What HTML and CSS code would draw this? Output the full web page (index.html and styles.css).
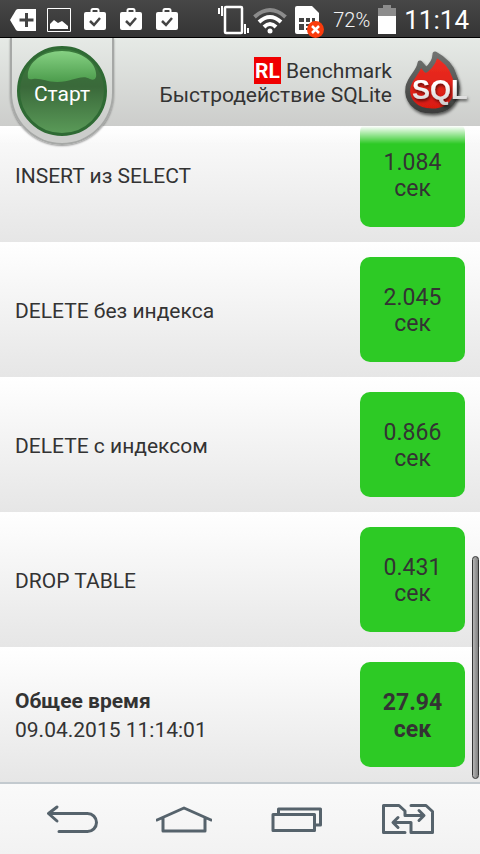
FILE: index.html
```html
<!DOCTYPE html>
<html lang="ru">
<head>
    <meta charset="UTF-8">
    <meta name="viewport" content="width=device-width, initial-scale=1.0">
    <title>RL Benchmark</title>
    <link rel="stylesheet" href="styles.css">
</head>
<body>
    <!-- shared icon -->
    <svg class="defs" width="0" height="0">
        <symbol id="bag" viewBox="0 0 24 24">
            <path d="M8.500 5V2.500Q8.500 1 10 1h4q1.500 0 1.500 1.500V5" fill="none" stroke="#fff" stroke-width="2"/>
            <path d="M1 6q0-2 2-2h18q2 0 2 2v14q0 2-2 2H3q-2 0-2-2z" fill="#fff"/>
            <path d="M7 13l4 4 6-7" fill="none" stroke="#444" stroke-width="2.500"/>
        </symbol>
    </svg>

    <div class="status-bar">
        <div class="status-left">
            <svg class="icon" width="24" height="24" viewBox="0 0 24 24">
                <path d="M-1 12L5 2q1-1 2-1h18v22H7q-1 0-2-1z" fill="#fff"/>
                <path d="M15.500 5v14M8.500 12h14" stroke="#444" stroke-width="3"/>
            </svg>
            <svg class="icon" width="24" height="24" viewBox="0 0 24 24">
                <path d="M.5.500h23v23H.5z" fill="none" stroke="#fff"/>
                <path d="M3 21v-5l4-4 4 3 4-2 6 5v3z" fill="#fff"/>
            </svg>
            <svg class="icon" width="24" height="24"><use href="#bag"/></svg>
            <svg class="icon" width="24" height="24"><use href="#bag"/></svg>
            <svg class="icon" width="24" height="24"><use href="#bag"/></svg>
        </div>
        <div class="status-right">
            <svg class="icon" width="27" height="30" viewBox="0 0 27 30">
                <rect x="7" y="2" width="17" height="26" rx="1" fill="none" stroke="#fff" stroke-width="2.500"/>
                <path d="M1 3v6M4 1v10M27 19v10M30 23v5" stroke="#fff" stroke-width="2"/>
            </svg>
            <svg class="icon" width="34" height="30" viewBox="0 0 34 30">
                <path d="M1.500 12q15.500-14 31 0" fill="none" stroke="#8c8c8c" stroke-width="4"/>
                <path d="M6 17q11-10 22 0M11 22q6-6 12 0" fill="none" stroke="#fff" stroke-width="4"/>
                <circle cx="17" cy="26" r="2.500" fill="#fff"/>
            </svg>
            <svg class="icon" width="30" height="30" viewBox="0 0 30 30">
                <path d="M0 3q0-2 2-2h15l7 7v19q0 2-2 2H2q-2 0-2-2z" fill="#fff"/>
                <path d="M4 13h5v4H4zM11 13h4v4h-4zM17 13h3v4h-3zM4 19h5v6H4zM11 19h4v2h-4zM11 23h4v2h-4z" fill="#444"/>
                <circle cx="20.500" cy="24.500" r="8.500" fill="#fa3b0c"/>
                <path d="M17 21l7 7M24 21l-7 7" stroke="#fff" stroke-width="2.500"/>
            </svg>
            <span class="battery-level">72%</span>
            <svg class="icon" width="18" height="30" viewBox="0 0 18 30">
                <path d="M0 3h5V0h8v3h5v8H0z" fill="#8c8c8c"/>
                <path d="M0 11h18v18H0z" fill="#fff"/>
            </svg>
            <span class="clock">11:14</span>
        </div>
    </div>

    <header class="header">
        <div class="start-holder">
            <button class="start-button">
                <svg class="gloss" width="70" height="34" viewBox="0 0 70 34">
                    <defs>
                        <linearGradient id="gloss" x1="0" y1="0" x2="0" y2="1">
                            <stop offset="0" stop-color="#86d183"/>
                            <stop offset="1" stop-color="#4c9c4c"/>
                        </linearGradient>
                    </defs>
                    <path d="M1 28C-1 14 14 1 35 1s36 13 34 26q-1 4-6 2c-9-5-17 3-33 3-10 0-16-4-24-3q-4 1-5-1z" fill="url(#gloss)"/>
                </svg>
                <span>Старт</span>
            </button>
        </div>
        <div class="title">
            <div><span class="rl">RL</span> Benchmark</div>
            <div>Быстродействие SQLite</div>
        </div>
        <svg class="logo" width="64" height="72" viewBox="0 0 64 72">
            <defs>
                <linearGradient id="flame" x1="0" y1="0" x2="0" y2="1">
                    <stop offset="0" stop-color="#ee3026"/>
                    <stop offset="1" stop-color="#d8180f"/>
                </linearGradient>
                <linearGradient id="edge" x1="0" y1="0" x2="0" y2="1">
                    <stop offset="0" stop-color="#707270"/>
                    <stop offset="1" stop-color="#3c3e3c"/>
                </linearGradient>
                <linearGradient id="silver" x1="0" y1="0" x2="0" y2="1">
                    <stop offset="0.300" stop-color="#fff"/>
                    <stop offset="1" stop-color="#ccc"/>
                </linearGradient>
                <filter id="shade" x="-20%" y="-20%" width="150%" height="150%">
                    <feDropShadow dx="1" dy="2" stdDeviation="1.500" flood-opacity="0.6"/>
                </filter>
            </defs>
            <path d="M31 8C42 14 48 22 50 29C57 43 52 65 28 65C10 65 2 53 4 41C6 31 15 26 16 17L22 24C27 20 31 15 31 8z" fill="url(#flame)" stroke="url(#edge)" stroke-width="5" stroke-linejoin="round" filter="url(#shade)"/>
            <text class="logo-text" x="8" y="53" fill="url(#silver)" filter="url(#shade)">SQL</text>
        </svg>
    </header>

    <main class="results">
        <ul class="list">
            <li class="row">
                <div class="name">INSERT из SELECT</div>
                <div class="value">1.084<br>сек</div>
            </li>
            <li class="row">
                <div class="name">DELETE без индекса</div>
                <div class="value">2.045<br>сек</div>
            </li>
            <li class="row">
                <div class="name">DELETE с индексом</div>
                <div class="value">0.866<br>сек</div>
            </li>
            <li class="row">
                <div class="name">DROP TABLE</div>
                <div class="value">0.431<br>сек</div>
            </li>
            <li class="row">
                <div class="name"><b>Общее время</b><br>09.04.2015 11:14:01</div>
                <div class="value total">27.94<br>сек</div>
            </li>
        </ul>
        <div class="scrollbar"></div>
    </main>

    <nav class="nav">
        <button class="nav-button" aria-label="Назад">
            <svg width="56" height="36" viewBox="0 0 56 36">
                <path d="M13 6L4.500 12.500L13 20M5 12.500h38.500a9 9 0 0 1 0 18H15"/>
            </svg>
        </button>
        <button class="nav-button" aria-label="Домой">
            <svg width="56" height="36" viewBox="0 0 56 36">
                <path d="M1 19L28 7l27 12M7 17v13h42V17"/>
            </svg>
        </button>
        <button class="nav-button" aria-label="Недавние">
            <svg width="56" height="36" viewBox="0 0 56 36">
                <path d="M5 13.500h41.500v16H5zM10.500 13V8h42v16H48"/>
            </svg>
        </button>
        <button class="nav-button" aria-label="Переключить">
            <svg width="56" height="36" viewBox="0 0 56 36">
                <path d="M25 31.500H3.500v-27H19l6 5.500v4.500h18M39 9.500l5 5-5 5M31 4.500h15l6.500 6v21H31v-10H13.500M18 16.500l-5 5 5 5"/>
            </svg>
        </button>
    </nav>
</body>
</html>
```
FILE: styles.css
```css
* {
    box-sizing: border-box;
}
body {
    margin: 0;
    height: 100vh;
    display: flex;
    flex-direction: column;
    overflow: hidden;
    font-family: Roboto, sans-serif;
    font-size: 21px;
    color: #333;
    background: #fff;
}
button {
    padding: 0;
    border: none;
    background: none;
    font-family: inherit;
    cursor: pointer;
}
.defs {
    position: absolute;
}

/* status bar */
.status-bar {
    display: flex;
    justify-content: space-between;
    align-items: center;
    height: 38px;
    flex-shrink: 0;
    padding: 2px 11px 0;
    background: linear-gradient(#474747, #343434);
    border-bottom: 1px solid #000;
    color: #fff;
}
.status-left,
.status-right {
    display: flex;
    align-items: center;
}
.status-left {
    gap: 12px;
}
.status-right {
    gap: 8px;
}
.icon {
    display: block;
    overflow: visible;
}
.battery-level {
    font-size: 20px;
    font-weight: 300;
    color: #f4f4f4;
}
.clock {
    font-size: 26px;
}

/* header */
.header {
    display: flex;
    align-items: center;
    height: 88px;
    flex-shrink: 0;
    padding: 0 12px 0 10px;
    background: linear-gradient(#e6eae6, #cccdcb);
}
.start-holder {
    align-self: flex-start;
    position: relative;
    z-index: 2;
    width: 104px;
    height: 107px;
    padding: 8px 5px;
    border: 2px solid #a6a8a6;
    border-top: none;
    border-radius: 0 0 52px 52px;
    background: linear-gradient(#e6eae6, #cccdcb 82%);
    box-shadow: 0 1px 2px rgba(0, 0, 0, 0.4);
}
.start-button {
    position: relative;
    display: block;
    width: 90px;
    height: 90px;
    padding-top: 6px;
    border: 3px solid #2f6a34;
    border-radius: 50%;
    background: linear-gradient(#3a7a3c, #3a693a 45%, #5a9a58);
    color: #fff;
    font-size: 21px;
    line-height: 24px;
}
.gloss {
    position: absolute;
    top: 1px;
    left: 7px;
}
.start-button span {
    position: relative;
}
.title {
    flex: 1;
    margin-right: 12px;
    padding-top: 2px;
    text-align: right;
    line-height: 24px;
}
.rl {
    padding: 2px 1px 1px;
    background: #f00000;
    color: #fff;
    font-weight: bold;
}
.logo {
    overflow: visible;
}
.logo-text {
    font-family: "Liberation Sans", sans-serif;
    font-size: 27px;
    font-weight: bold;
}

/* results */
.results {
    flex: 1;
    min-height: 0;
    position: relative;
    display: flex;
    flex-direction: column;
    justify-content: flex-end;
    overflow: hidden;
}
.results::before {
    content: "";
    position: absolute;
    top: 0;
    left: 0;
    right: 0;
    height: 18px;
    background: linear-gradient(#fff, rgba(255, 255, 255, 0));
}
.list {
    margin: 0;
    padding: 0;
    list-style: none;
}
.row {
    display: flex;
    align-items: center;
    justify-content: space-between;
    padding: 15px;
    background: linear-gradient(#fff, #e6e6e6);
}
.name {
    padding-top: 3px;
    line-height: 29px;
}
.value {
    display: flex;
    flex-direction: column;
    justify-content: center;
    width: 105px;
    height: 105px;
    padding-top: 2px;
    border-radius: 10px;
    background: #2dca25;
    font-size: 23px;
    line-height: 26px;
    text-align: center;
}
.total {
    font-weight: bold;
    line-height: 27px;
}
.scrollbar {
    position: absolute;
    right: 1px;
    bottom: 3px;
    width: 7px;
    height: 34%;
    border: 1px solid #333;
    border-radius: 4px;
    background: linear-gradient(to right, #b4b4b4, #808080);
}

/* navigation */
.nav {
    display: flex;
    justify-content: space-between;
    align-items: center;
    height: 72px;
    flex-shrink: 0;
    padding: 0 44px;
    border-top: 2px solid #c3cacf;
    background: linear-gradient(#fafafa, #f2f2f2);
}
.nav-button svg {
    display: block;
    fill: none;
    stroke: #56636c;
    stroke-width: 3;
    stroke-linecap: round;
    stroke-linejoin: round;
}
```
